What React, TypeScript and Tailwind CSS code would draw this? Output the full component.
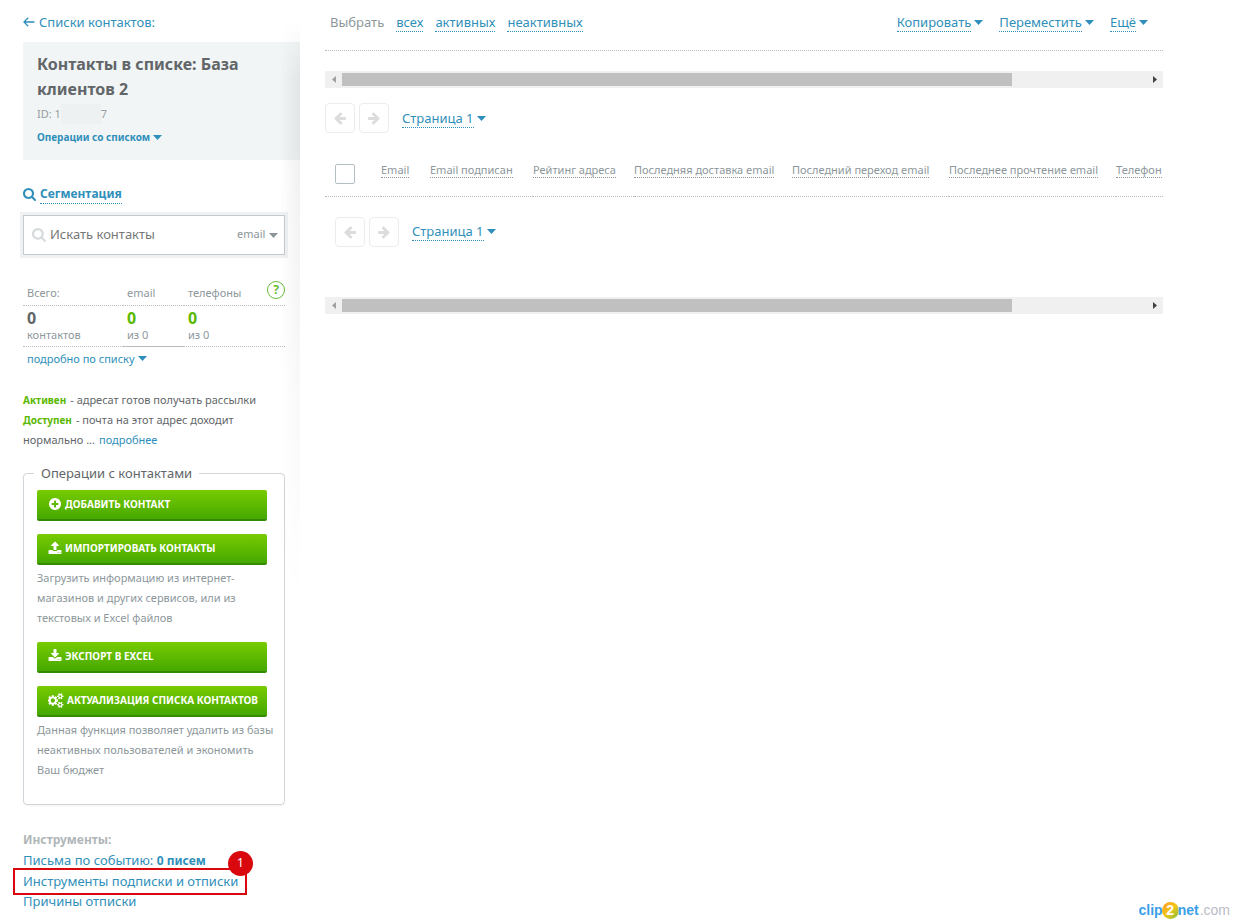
import type { ReactNode } from 'react';

const icons = {
  search: "M1152 704q0-185-131.5-316.5t-316.5-131.5-316.5 131.5-131.5 316.5 131.5 316.5 316.5 131.5 316.5-131.5 131.5-316.5zm512 832q0 52-38 90t-90 38q-54 0-90-38l-343-342q-179 124-399 124-143 0-273.5-55.5t-225-150-150-225-55.5-273.5 55.5-273.5 150-225 225-150 273.5-55.5 273.5 55.5 225 150 150 225 55.5 273.5q0 220-124 399l343 343q37 37 37 90z",
  plus: "M1344 960v-128q0-26-19-45t-45-19h-256v-256q0-26-19-45t-45-19h-128q-26 0-45 19t-19 45v256h-256q-26 0-45 19t-19 45v128q0 26 19 45t45 19h256v256q0 26 19 45t45 19h128q26 0 45-19t19-45v-256h256q26 0 45-19t19-45zm320-64q0 209-103 385.5t-279.5 279.5-385.5 103-385.5-103-279.5-279.5-103-385.5 103-385.5 279.5-279.5 385.5-103 385.5 103 279.5 279.5 103 385.5z",
  upload: "M1344 1472q0-26-19-45t-45-19-45 19-19 45 19 45 45 19 45-19 19-45zm256 0q0-26-19-45t-45-19-45 19-19 45 19 45 45 19 45-19 19-45zm128-224v320q0 40-28 68t-68 28h-1472q-40 0-68-28t-28-68v-320q0-40 28-68t68-28h427q21 56 70.5 92t110.5 36h256q61 0 110.5-36t70.5-92h427q40 0 68 28t28 68zm-325-648q-17 40-59 40h-256v448q0 26-19 45t-45 19h-256q-26 0-45-19t-19-45v-448h-256q-42 0-59-40-17-39 14-69l448-448q18-19 45-19t45 19l448 448q31 30 14 69z",
  download: "M1344 1344q0-26-19-45t-45-19-45 19-19 45 19 45 45 19 45-19 19-45zm256 0q0-26-19-45t-45-19-45 19-19 45 19 45 45 19 45-19 19-45zm128-224v320q0 40-28 68t-68 28h-1472q-40 0-68-28t-28-68v-320q0-40 28-68t68-28h465l135 136q58 56 136 56t136-56l136-136h464q40 0 68 28t28 68zm-325-569q17 41-14 70l-448 448q-18 19-45 19t-45-19l-448-448q-31-29-14-70 17-39 59-39h256v-448q0-26 19-45t45-19h256q26 0 45 19t19 45v448h256q42 0 59 39z",
  cogs: "M832 896q0-106-75-181t-181-75-181 75-75 181 75 181 181 75 181-75 75-181zm768 512q0-52-38-90t-90-38-90 38-38 90q0 53 37.5 90.5t90.5 37.5 90.5-37.5 37.5-90.5zm0-1024q0-52-38-90t-90-38-90 38-38 90q0 53 37.5 90.5t90.5 37.5 90.5-37.5 37.5-90.5zm-384 421v185q0 10-7 19.5t-16 10.5l-155 24q-11 35-32 76 34 48 90 115 7 11 7 20 0 12-7 19-23 30-82.5 89.5t-78.5 59.5q-11 0-21-7l-115-90q-37 19-77 31-11 108-23 155-7 24-30 24h-186q-11 0-20-7.5t-10-17.5l-23-153q-34-10-75-31l-118 89q-7 7-20 7-11 0-21-8-144-133-144-160 0-9 7-19 10-14 41-53t47-61q-23-44-35-82l-152-24q-10-1-17-9.5t-7-19.5v-185q0-10 7-19.5t16-10.5l155-24q11-35 32-76-34-48-90-115-7-11-7-20 0-12 7-20 22-30 82-89t79-59q11 0 21 7l115 90q34-18 77-32 11-108 23-154 7-24 30-24h186q11 0 20 7.5t10 17.5l23 153q34 10 75 31l118-89q8-7 20-7 11 0 21 8 144 133 144 160 0 8-7 19-12 16-42 54t-45 60q23 48 34 82l152 23q10 2 17 10.5t7 19.5zm640 533v140q0 16-149 31-12 27-30 52 51 113 51 138 0 4-4 7-122 71-124 71-8 0-46-47t-52-68q-20 2-30 2t-30-2q-14 21-52 68t-46 47q-2 0-124-71-4-3-4-7 0-25 51-138-18-25-30-52-149-15-149-31v-140q0-16 149-31 13-29 30-52-51-113-51-138 0-4 4-7 4-2 35-20t59-34 30-16q8 0 46 46.5t52 67.5q20-2 30-2t30 2q51-71 92-112l6-2q4 0 124 70 4 3 4 7 0 25-51 138 17 23 30 52 149 15 149 31zm0-1024v140q0 16-149 31-12 27-30 52 51 113 51 138 0 4-4 7-122 71-124 71-8 0-46-47t-52-68q-20 2-30 2t-30-2q-14 21-52 68t-46 47q-2 0-124-71-4-3-4-7 0-25 51-138-18-25-30-52-149-15-149-31v-140q0-16 149-31 13-29 30-52-51-113-51-138 0-4 4-7 4-2 35-20t59-34 30-16q8 0 46 46.5t52 67.5q20-2 30-2t30 2q51-71 92-112l6-2q4 0 124 70 4 3 4 7 0 25-51 138 17 23 30 52 149 15 149 31z",
  arrow: "M1664 896v128q0 53-32.5 90.5t-84.5 37.5h-704l293 294q38 36 38 90t-38 90l-75 76q-37 37-90 37-52 0-91-37l-651-652q-37-37-37-90 0-52 37-91l651-650q38-38 91-38 52 0 90 38l75 74q38 38 38 91t-38 91l-293 293h704q52 0 84.5 37.5t32.5 90.5z",
};

const columns = [
  { name: "Email", width: "w-[49px]" },
  { name: "Email подписан", width: "w-[103px]" },
  { name: "Рейтинг адреса", width: "w-[101px]" },
  { name: "Последняя доставка email", width: "w-[158px]" },
  { name: "Последний переход email", width: "w-[157px]" },
  { name: "Последнее прочтение email", width: "w-[167px]" },
  { name: "Телефон", width: "" },
];

function Icon({ name, className, wide = false }: { name: keyof typeof icons; className: string; wide?: boolean }) {
  return (
    <svg viewBox={wide ? "0 0 1920 1792" : "0 0 1792 1792"} className={className} fill="currentColor" aria-hidden="true">
      <path d={icons[name]} />
    </svg>
  );
}

function Caret() {
  return (
    <svg viewBox="0 0 9 5" className="h-[5px] w-[9px] shrink-0" fill="currentColor" aria-hidden="true">
      <path d="M0 0h9L4.5 5z" />
    </svg>
  );
}

function Dropdown({ children }: { children: ReactNode }) {
  return (
    <button type="button" className="flex items-center gap-[3px] text-[13px] leading-[18px] text-[#2f8fba]">
      <span className="border-b border-dotted border-[#2f8fba]">{children}</span>
      <Caret />
    </button>
  );
}

function GreenButton({ icon, children }: { icon: keyof typeof icons; children: ReactNode }) {
  return (
    <button
      type="button"
      className="flex h-[31px] w-full items-center gap-[3px] rounded-xs border-b-2 border-[#348a00] bg-linear-to-b from-[#77cb00] to-[#45a800] pl-[11px] text-[10px] font-bold whitespace-nowrap text-white uppercase"
    >
      <Icon name={icon} wide={icon === "cogs"} className={icon === "cogs" ? "h-[15px] w-4" : "size-[14px]"} />
      {children}
    </button>
  );
}

function Pager() {
  return (
    <div className="flex items-center">
      <button type="button" aria-label="Назад" className="mr-1 flex size-[30px] items-center justify-center rounded-sm border border-[#ececec] text-[#dcdcdc]">
        <Icon name="arrow" className="size-[14px]" />
      </button>
      <button type="button" aria-label="Вперёд" className="mr-[13px] flex size-[30px] items-center justify-center rounded-sm border border-[#ececec] text-[#dcdcdc]">
        <Icon name="arrow" className="size-[14px] -scale-x-100" />
      </button>
      <Dropdown>Страница 1</Dropdown>
    </div>
  );
}

function ScrollBar() {
  return (
    <div className="flex h-[17px] items-center bg-[#f0f0f0]">
      <button type="button" aria-label="Прокрутить влево" className="flex w-[17px] justify-center text-[#a0a0a0]">
        <svg viewBox="0 0 4 7" className="h-[7px] w-1" fill="currentColor"><path d="M4 0v7L0 3.5z" /></svg>
      </button>
      <div className="h-[13px] flex-1">
        <div className="h-full w-5/6 bg-[#c0c0c0]" />
      </div>
      <button type="button" aria-label="Прокрутить вправо" className="flex w-[17px] justify-center text-[#404040]">
        <svg viewBox="0 0 4 7" className="h-[7px] w-1" fill="currentColor"><path d="M0 0v7l4-3.5z" /></svg>
      </button>
    </div>
  );
}

function Sidebar() {
  return (
    <aside className="relative w-[300px] shrink-0 pr-[15px] pl-[23px] text-[11px] leading-5">
      <a href="#lists" className="mt-3 flex items-center gap-1 text-[13px] text-[#2f8fba]">
        <svg viewBox="0 0 12 10" className="h-[10px] w-3" fill="none" stroke="currentColor" strokeWidth="1.3" aria-hidden="true">
          <path d="M11.5 5H1M5.2 .8L1 5l4.2 4.2" />
        </svg>
        Списки контактов:
      </a>

      <div className="mt-[10px] -mr-[15px] h-[118px] bg-[#f1f5f6] pt-[10px] pl-[14px]">
        <h1 className="w-[210px] text-base leading-[25px] font-bold text-[#626669]">Контакты в списке: База клиентов 2</h1>
        <p className="mt-[2px] flex text-[#969c9f]">
          ID: 1<span className="w-10 bg-[#eef1f2]" />7
        </p>
        <button type="button" className="mt-[3px] flex items-center gap-[3px] text-[10px] font-bold text-[#2f8fba]">
          Операции со списком <Caret />
        </button>
      </div>

      <a href="#segments" className="mt-[25px] flex items-center gap-[3px] text-[12px] leading-[18px] font-bold text-[#2f8fba]">
        <Icon name="search" className="size-[14px]" />
        <span className="border-b border-dotted border-[#2f8fba]">Сегментация</span>
      </a>

      <div className="mt-[11px] flex h-10 items-center border border-[#c3cbce] bg-white pr-[6px] pl-2 ring-3 ring-[#eff1f2]">
        <Icon name="search" className="mr-[3px] size-[15px] shrink-0 text-[#d6dadc]" />
        <input aria-label="Искать контакты" placeholder="Искать контакты" className="min-w-0 flex-1 pb-[2px] text-[13px] outline-none placeholder:text-[#777]" />
        <label className="flex items-center gap-[3px] text-[#8b9599]">
          <select aria-label="Поле поиска" className="appearance-none pb-[2px]">
            <option>email</option>
          </select>
          <Caret />
        </label>
      </div>

      <div className="relative mt-[26px]">
        <table className="w-full table-fixed border-collapse text-left text-[#8d979b]">
          <thead>
            <tr className="h-6 border-b border-dotted border-[#bbb]">
              <th className="w-[100px] pl-1 font-normal">Всего:</th>
              <th className="w-[61px] pl-1 font-normal">email</th>
              <th className="pl-1 font-normal">телефоны</th>
            </tr>
          </thead>
          <tbody>
            <tr className="h-[41px] leading-4">
              <td className="border-b border-dotted border-[#bbb] pl-1">
                <b className="block text-base leading-[18px] text-[#626669]">0</b>контактов
              </td>
              <td className="border-b border-[#bbb] pl-1">
                <b className="block text-base leading-[18px] text-[#5ab800]">0</b>из 0
              </td>
              <td className="border-b border-dotted border-[#bbb] pl-1">
                <b className="block text-base leading-[18px] text-[#5ab800]">0</b>из 0
              </td>
            </tr>
          </tbody>
        </table>
        <button type="button" aria-label="Справка" className="absolute top-0 right-0 flex size-[18px] items-center justify-center rounded-full border border-[#65bd35] text-[12px] font-bold text-[#65bd35]">
          ?
        </button>
      </div>
      <button type="button" className="mt-[2px] ml-1 flex items-center gap-[3px] text-[#2f8fba]">
        подробно по списку <Caret />
      </button>

      <div className="mt-[21px] whitespace-nowrap text-[#626669]">
        <div className="flex gap-1"><b className="text-[10px] text-[#5ab800]">Активен</b><span>- адресат готов получать рассылки</span></div>
        <div className="flex gap-1"><b className="text-[10px] text-[#5ab800]">Доступен</b><span>- почта на этот адрес доходит</span></div>
        <div className="flex gap-1"><span>нормально ...</span><a href="#more" className="text-[#2f8fba]">подробнее</a></div>
      </div>

      <fieldset className="mt-[13px] rounded border border-[#d0d6d9] px-[13px] pb-6 text-[#8d979b] shadow-xs">
        <legend className="-ml-[3px] px-[7px] pb-[2px] text-[13px] text-[#626669]">Операции с контактами</legend>
        <div className="mt-[5px] flex flex-col gap-[13px] pr-1">
          <GreenButton icon="plus">Добавить контакт</GreenButton>
          <GreenButton icon="upload">Импортировать контакты</GreenButton>
        </div>
        <p className="mt-[3px] -mr-2">Загрузить информацию из интернет-<br />магазинов и других сервисов, или из<br />текстовых и Excel файлов</p>
        <div className="mt-[14px] flex flex-col gap-[13px] pr-1">
          <GreenButton icon="download">Экспорт в Excel</GreenButton>
          <GreenButton icon="cogs">Актуализация списка контактов</GreenButton>
        </div>
        <p className="mt-[3px] -mr-2 whitespace-nowrap">Данная функция позволяет удалить из базы<br />неактивных пользователей и экономить<br />Ваш бюджет</p>
      </fieldset>

      <nav className="mt-[25px] flex flex-col items-start text-[13px] text-[#2f8fba]">
        <b className="text-[12px] text-[#b0b6b8]">Инструменты:</b>
        <a href="#events">Письма по событию: <b className="text-[12px]">0 писем</b></a>
        <div className="relative whitespace-nowrap">
          <a href="#tools">Инструменты подписки и отписки</a>
          <div className="pointer-events-none absolute -top-[3px] -left-[10px] h-[27px] w-[234px] border-2 border-[#d9080c]">
            <span className="absolute -top-[19px] -right-2 flex size-[25px] items-center justify-center rounded-full bg-[#d9080c] text-[12px] text-white">1</span>
          </div>
        </div>
        <a href="#reasons">Причины отписки</a>
      </nav>

      {/* soft shade along the right edge */}
      <div className="pointer-events-none absolute top-5 right-0 h-[580px] w-5 bg-linear-to-r from-transparent to-black/6 mask-t-from-90% mask-b-from-20%" />
    </aside>
  );
}

export default function App() {
  return (
    <div className="relative flex min-h-screen bg-white font-['Noto_Sans','Open_Sans',sans-serif]">
      <Sidebar />

      <main className="mr-[81px] ml-[25px] min-w-0 flex-1">
        <div className="flex h-[51px] items-start justify-between border-b border-dotted border-[#bbb] pt-[13px] pr-[15px] pl-[5px] text-[13px] leading-[18px]">
          <div className="flex gap-3 text-[#8d979b]">
            <span>Выбрать</span>
            {["всех", "активных", "неактивных"].map((name) => (
              <button key={name} type="button" className="border-b border-dotted border-[#2f8fba] text-[#2f8fba]">{name}</button>
            ))}
          </div>
          <div className="flex gap-4">
            <Dropdown>Копировать</Dropdown>
            <Dropdown>Переместить</Dropdown>
            <Dropdown>Ещё</Dropdown>
          </div>
        </div>

        <div className="mt-5">
          <ScrollBar />
        </div>
        <div className="mt-[15px]">
          <Pager />
        </div>

        <div className="mt-[15px] overflow-hidden">
          <table className="w-full table-fixed border-collapse text-left text-[11px] leading-[14px] text-[#8d979b]">
            <thead>
              <tr className="h-12 border-b border-dotted border-[#bbb]">
                <th className="w-[56px] pt-1 pl-[10px]">
                  <input type="checkbox" aria-label="Выбрать все" className="block size-5 appearance-none rounded-xs border border-[#b5bfc3] bg-white" />
                </th>
                {columns.map((col) => (
                  <th key={col.name} className={`${col.width} pb-[3px] font-normal whitespace-nowrap`}>
                    <button type="button" className="block border-b border-dotted border-[#8d979b]">{col.name}</button>
                  </th>
                ))}
              </tr>
            </thead>
          </table>
        </div>

        <div className="mt-5 mb-[50px] pl-[10px]">
          <Pager />
        </div>
        <ScrollBar />
      </main>

      <div className="absolute right-[14px] bottom-[2px] flex items-center font-['Liberation_Sans',sans-serif] text-[14px] leading-[18px]">
        <span className="font-bold text-[#3aa0e8]">clip</span>
        <span className="-mx-px flex size-[17px] items-center justify-center rounded-full bg-linear-to-br from-[#ff9a1f] via-[#f5c518] to-[#65bd35] font-bold text-white">2</span>
        <span className="font-bold text-[#3aa0e8]">net</span>
        <span className="ml-px text-[#b9bcc6]">.com</span>
      </div>
    </div>
  );
}
